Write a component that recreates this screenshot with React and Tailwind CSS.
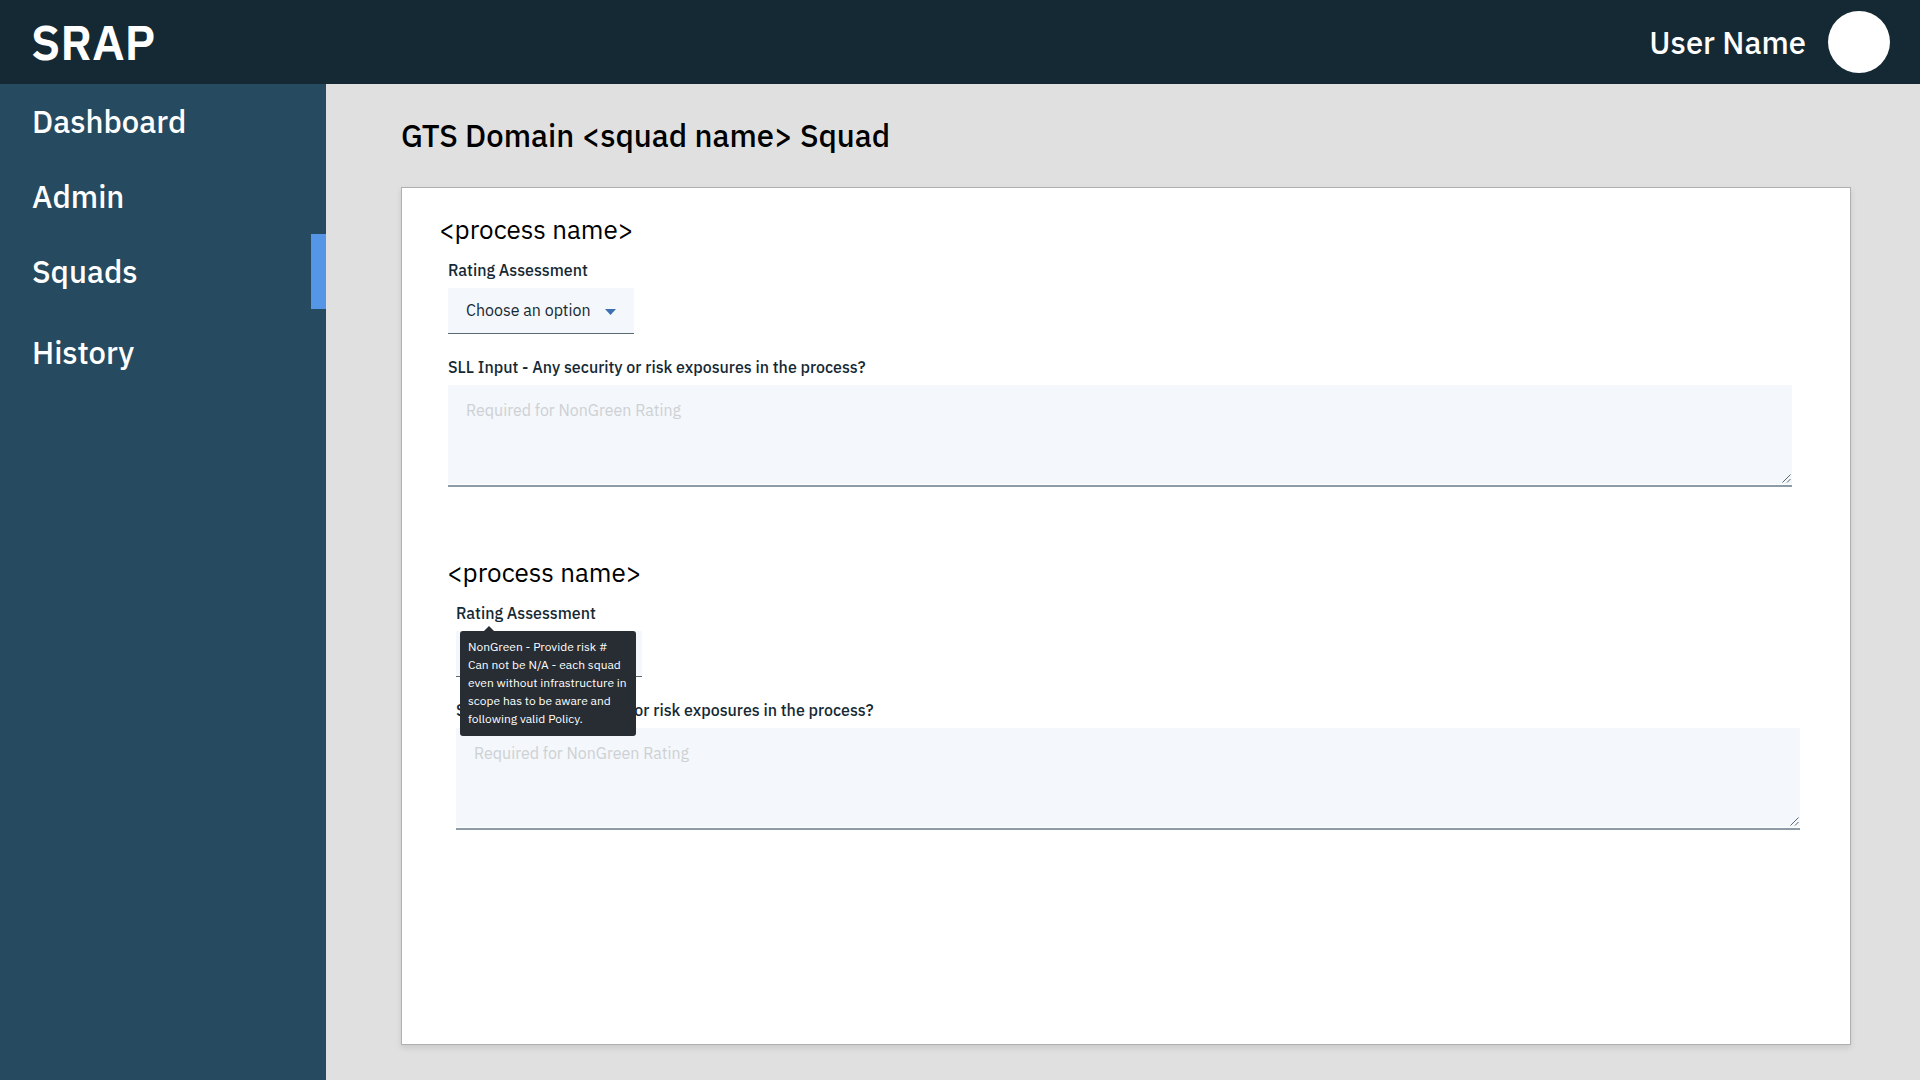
import React from "react";

const NAV_ITEMS = [
  { label: "Dashboard" },
  { label: "Admin" },
  { label: "Squads", active: true },
  { label: "History" },
];

function Header() {
  return (
    <header className="flex h-21 items-center justify-between bg-[#152934] pr-[30px] pl-[31px] text-white">
      <a href="#home" className="text-5xl leading-none font-semibold">
        SRAP
      </a>
      <div className="flex items-center gap-[22px]">
        <span className="pt-0.5 text-[31px] leading-10 font-medium">User Name</span>
        <button
          type="button"
          aria-label="Account"
          className="size-[62px] rounded-full bg-white"
        />
      </div>
    </header>
  );
}

function Sidebar() {
  return (
    <nav className="w-[326px] shrink-0 bg-[#264a60]">
      <ul>
        {NAV_ITEMS.map(({ label, active }) => (
          <li key={label} className="last:mt-1.5">
            <a
              href={`#${label.toLowerCase()}`}
              aria-current={active ? "page" : undefined}
              className="flex h-[75px] items-center border-r-[15px] border-transparent pl-8 text-[31px] leading-10 font-medium text-white aria-[current=page]:border-[#5596e6]"
            >
              {label}
            </a>
          </li>
        ))}
      </ul>
    </nav>
  );
}

function Tooltip() {
  return (
    <div
      role="tooltip"
      className="absolute top-7 left-1 z-10 w-44 rounded-[3px] bg-[#272d33] px-2 pt-[7px] pb-2 text-xs leading-[18px] text-white"
    >
      <svg
        viewBox="0 0 12 6"
        className="absolute -top-[5px] left-[23px] h-1.5 w-3 fill-[#272d33]"
        aria-hidden="true"
      >
        <path d="M0 6 6 0l6 6z" />
      </svg>
      NonGreen - Provide risk #
      <br />
      Can not be N/A - each squad even without infrastructure in scope has to be
      aware and following valid Policy.
    </div>
  );
}

function ProcessSection({ id, tooltip }) {
  return (
    <section>
      <h2 className="text-[26px] leading-8 font-normal text-black">
        &lt;process name&gt;
      </h2>
      <div className="pt-[15px] pl-[9px] text-base leading-5 text-[#152934]">
        <div className="relative w-max">
          <label htmlFor={`${id}-rating`} className="block font-medium">
            Rating Assessment
          </label>
          <div className="relative mt-2 w-[186px]">
            <select
              id={`${id}-rating`}
              className="block h-[46px] w-full appearance-none border-b border-[#5a6872] bg-[#f4f7fb] pr-10 pb-0.5 pl-[18px]"
            >
              <option>Choose an option</option>
            </select>
            <svg
              viewBox="0 0 10 5"
              className="pointer-events-none absolute top-[21px] right-[18px] h-[6px] w-[11px] fill-[#3d70b2]"
              aria-hidden="true"
              preserveAspectRatio="none"
            >
              <path d="M0 0h10L5 5z" />
            </svg>
          </div>
          {tooltip && <Tooltip />}
        </div>

        <label htmlFor={`${id}-sll`} className="mt-[23px] block w-max font-medium">
          SLL Input - Any security or risk exposures in the process?
        </label>
        <div className="relative mt-2 border-b-2 border-[#8c9ba5] pb-px">
          <textarea
            id={`${id}-sll`}
            placeholder="Required for NonGreen Rating"
            className="block h-[99px] w-full resize-none bg-[#f4f7fb] px-[18px] py-[15px] placeholder:text-[#cdd1d4]"
          />
          <svg
            viewBox="0 0 9 9"
            className="pointer-events-none absolute right-px bottom-0.5 size-[9px] fill-none stroke-[#5a6872]"
            aria-hidden="true"
          >
            <path d="M.5 8.5l8-8M5 8.5l3.5-3.5" />
          </svg>
        </div>
      </div>
    </section>
  );
}

export default function App() {
  return (
    <div className="flex min-h-screen flex-col bg-[#e0e0e0] font-['IBM_Plex_Sans','Roboto',sans-serif]">
      <Header />
      <div className="flex flex-1">
        <Sidebar />
        <main className="flex flex-1 flex-col pt-8 pr-[69px] pb-[35px] pl-[75px]">
          <h1 className="text-[31px] leading-10 font-medium text-black">
            GTS Domain &lt;squad name&gt; Squad
          </h1>
          <form className="mt-[31px] flex-1 border border-[#b0b0b0] bg-white pt-[25px] shadow-[0_3px_6px_rgba(0,0,0,0.1)]">
            <div className="mr-[58px] ml-[37px]">
              <ProcessSection id="process-1" />
            </div>
            <div className="mt-[69px] mr-[50px] ml-[45px]">
              <ProcessSection id="process-2" tooltip />
            </div>
          </form>
        </main>
      </div>
    </div>
  );
}
